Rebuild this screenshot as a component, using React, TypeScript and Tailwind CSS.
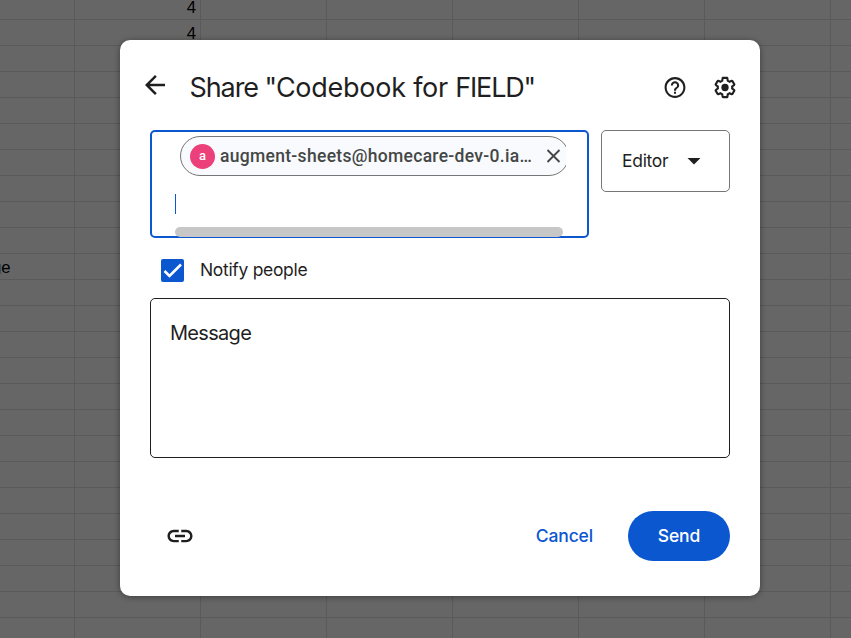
import type { ReactNode } from "react";
import { MdArrowBack, MdHelpOutline, MdLink } from "react-icons/md";

const columns = [75, 126, 126, 126, 126, 126, 126, 126];
const rows = Array.from({ length: 25 }, (_, i) => i);

const cellText: Record<string, string> = { "0-1": "4", "1-1": "4", "10-0": "ge" };

function Sheet() {
  return (
    <div className="h-full w-[957px] font-['Liberation_Sans',Arial,sans-serif] text-[16.7px] text-black">
      {rows.map((r) => (
        <div key={r} className={r === 0 ? "flex h-[20px]" : "flex h-[26px]"}>
          {columns.map((width, c) => (
            <div
              key={c}
              style={{ width }}
              className={`flex shrink-0 items-end border-r border-b border-[#5a5a5a] pb-[3px] leading-[16px] ${
                c === 1 ? "justify-end pr-[4px]" : ""
              }`}
            >
              {cellText[`${r}-${c}`] && (
                <span className={c === 0 ? "-ml-[8px]" : ""}>{cellText[`${r}-${c}`]}</span>
              )}
            </div>
          ))}
        </div>
      ))}
    </div>
  );
}

function IconButton({ label, children }: { label: string; children: ReactNode }) {
  return (
    <button aria-label={label} className="flex size-[50px] shrink-0 items-center justify-center">
      {children}
    </button>
  );
}

function GearIcon() {
  return (
    <svg viewBox="-0.48 0 24.96 24" fill="currentColor" className="h-[25px] w-[26px]">
      <path d="M13.85 22.25h-3.7c-.74 0-1.36-.54-1.45-1.27l-.27-1.89c-.27-.14-.53-.29-.79-.46l-1.8.72c-.7.26-1.47-.03-1.81-.65L2.2 15.53c-.35-.66-.2-1.44.36-1.88l1.53-1.19c-.01-.15-.02-.3-.02-.46 0-.15.01-.31.02-.46l-1.52-1.19c-.59-.45-.74-1.26-.37-1.88l1.85-3.19c.34-.62 1.11-.9 1.79-.63l1.81.73c.26-.17.52-.32.78-.46l.27-1.91c.09-.7.71-1.25 1.44-1.25h3.7c.74 0 1.36.54 1.45 1.27l.27 1.89c.27.14.53.29.79.46l1.8-.72c.71-.26 1.48.03 1.82.65l1.84 3.18c.36.66.2 1.44-.36 1.88l-1.52 1.19c.01.15.02.3.02.46s-.01.31-.02.46l1.52 1.19c.56.45.72 1.23.37 1.86l-1.86 3.22c-.34.62-1.11.9-1.8.63l-1.8-.72c-.26.17-.52.32-.78.46l-.27 1.91c-.1.68-.72 1.22-1.46 1.22zm-3.23-2h2.76l.37-2.55.53-.22c.44-.18.88-.44 1.34-.78l.45-.34 2.38.96 1.38-2.4-2.03-1.58.07-.56c.03-.26.06-.51.06-.78s-.03-.53-.06-.78l-.07-.56 2.03-1.58-1.39-2.4-2.39.96-.45-.35c-.42-.32-.87-.58-1.33-.77l-.52-.22-.37-2.55h-2.76l-.37 2.55-.53.21c-.44.19-.88.44-1.34.79l-.45.33-2.38-.95-1.39 2.39 2.03 1.58-.07.56a7 7 0 0 0-.06.79c0 .26.02.53.06.78l.07.56-2.03 1.58 1.38 2.4 2.39-.96.45.35c.43.33.86.58 1.33.77l.53.22.38 2.55z" />
      <circle cx="12" cy="12" r="3.5" />
    </svg>
  );
}

function RecipientField() {
  return (
    <div className="flex h-[108px] w-[439px] flex-col rounded-[5px] border-2 border-[#0b57d0] pl-[23px]">
      <div className="h-[50px] w-[391px] shrink-0 overflow-hidden pt-[4px] pl-[5px]">
        <div className="flex h-[40px] w-[389px] items-center rounded-full border border-[#747775] bg-[#f8fafd] pl-[9px]">
          <span className="flex size-[25px] shrink-0 items-center justify-center rounded-full bg-[#ec407a] font-[Roboto,sans-serif] text-[13px] font-medium text-white">
            a
          </span>
          <span className="ml-[5px] w-[321px] shrink-0 whitespace-nowrap font-[Roboto,sans-serif] text-[17.5px] font-medium tracking-[0.3px] text-[#444746]">
            augment-sheets@homecare-dev-0.ia…
          </span>
          <svg width="25" height="26" viewBox="0 0 25 26" className="shrink-0 text-[#444746]">
            <path d="M6.5 7l12 12M18.5 7l-12 12" stroke="currentColor" strokeWidth="1.9" fill="none" />
          </svg>
        </div>
      </div>
      <div className="mt-[12px] h-[20px] w-px shrink-0 bg-[#0b57d0]" />
      <div className="mt-[13px] h-[10px] w-[388px] shrink-0 rounded-full bg-[#c7c7c7]" />
    </div>
  );
}

export default function App() {
  return (
    <div className="relative h-[638px] w-[851px] overflow-hidden bg-[#666666]">
      <Sheet />
      <div
        role="dialog"
        className="absolute top-[40px] left-[120px] flex h-[556px] w-[640px] flex-col rounded-[10px] bg-white font-[Inter,sans-serif] text-[#1f1f1f] shadow-[0_1px_6px_rgba(0,0,0,0.4)]"
      >
        <header className="flex h-[90px] items-center pt-[5px] pr-[10px] pl-[20px]">
          <button aria-label="Back" className="mb-[5px] flex w-[30px] justify-center">
            <MdArrowBack size={30} className="shrink-0" />
          </button>
          <h1 className="ml-[19.5px] grow whitespace-nowrap pt-[2px] text-[27px] font-normal">
            <span className="tracking-[-1.1px]">Share "</span>
            <span className="tracking-[-0.25px]">Codebook for </span>
            <span className="tracking-[-1.2px]">FIELD"</span>
          </h1>
          <IconButton label="Help">
            <MdHelpOutline viewBox="-0.48 0 24.96 24" className="h-[25px] w-[26px]" />
          </IconButton>
          <IconButton label="Settings">
            <GearIcon />
          </IconButton>
        </header>

        <div className="flex gap-[12px] px-[30px]">
          <RecipientField />
          <button className="flex h-[62px] w-[129px] items-center rounded-[5px] border border-[#747775] pl-[20px] text-[17.5px] tracking-[-0.3px]">
            <span className="w-[65px] text-left">Editor</span>
            <svg width="14" height="7" viewBox="0 0 14 7" fill="currentColor">
              <path d="M0.5 0h13L7 6.5z" />
            </svg>
          </button>
        </div>

        <label className="flex h-[60px] items-center pt-[5px] pl-[41px] text-[17.5px] tracking-[-0.32px]">
          <span className="flex size-[23px] items-center justify-center rounded-[2px] bg-[#0b57d0]">
            <svg width="23" height="23" viewBox="0 0 23 23" fill="none">
              <path d="M3.5 12l5 5L20 5.5" stroke="white" strokeWidth="2.5" />
            </svg>
          </span>
          <span className="ml-[16px]">Notify people</span>
        </label>

        <div className="mx-[30px] h-[160px] rounded-[5px] border border-[#1f1f1f] px-[19px] pt-[19px] text-[20px] leading-[30px] tracking-[-0.7px]">
          Message
        </div>

        <footer className="mt-[53px] flex h-[50px] items-center pr-[30px] pl-[35px]">
          <IconButton label="Copy link">
            <MdLink size={30} />
          </IconButton>
          <button className="ml-auto text-[17.5px] font-medium tracking-[-0.15px] text-[#0b57d0]">
            Cancel
          </button>
          <button className="ml-[35px] h-[50px] w-[102px] rounded-full bg-[#0b57d0] text-[17.5px] font-medium tracking-[-0.15px] text-white">
            Send
          </button>
        </footer>
      </div>
    </div>
  );
}
